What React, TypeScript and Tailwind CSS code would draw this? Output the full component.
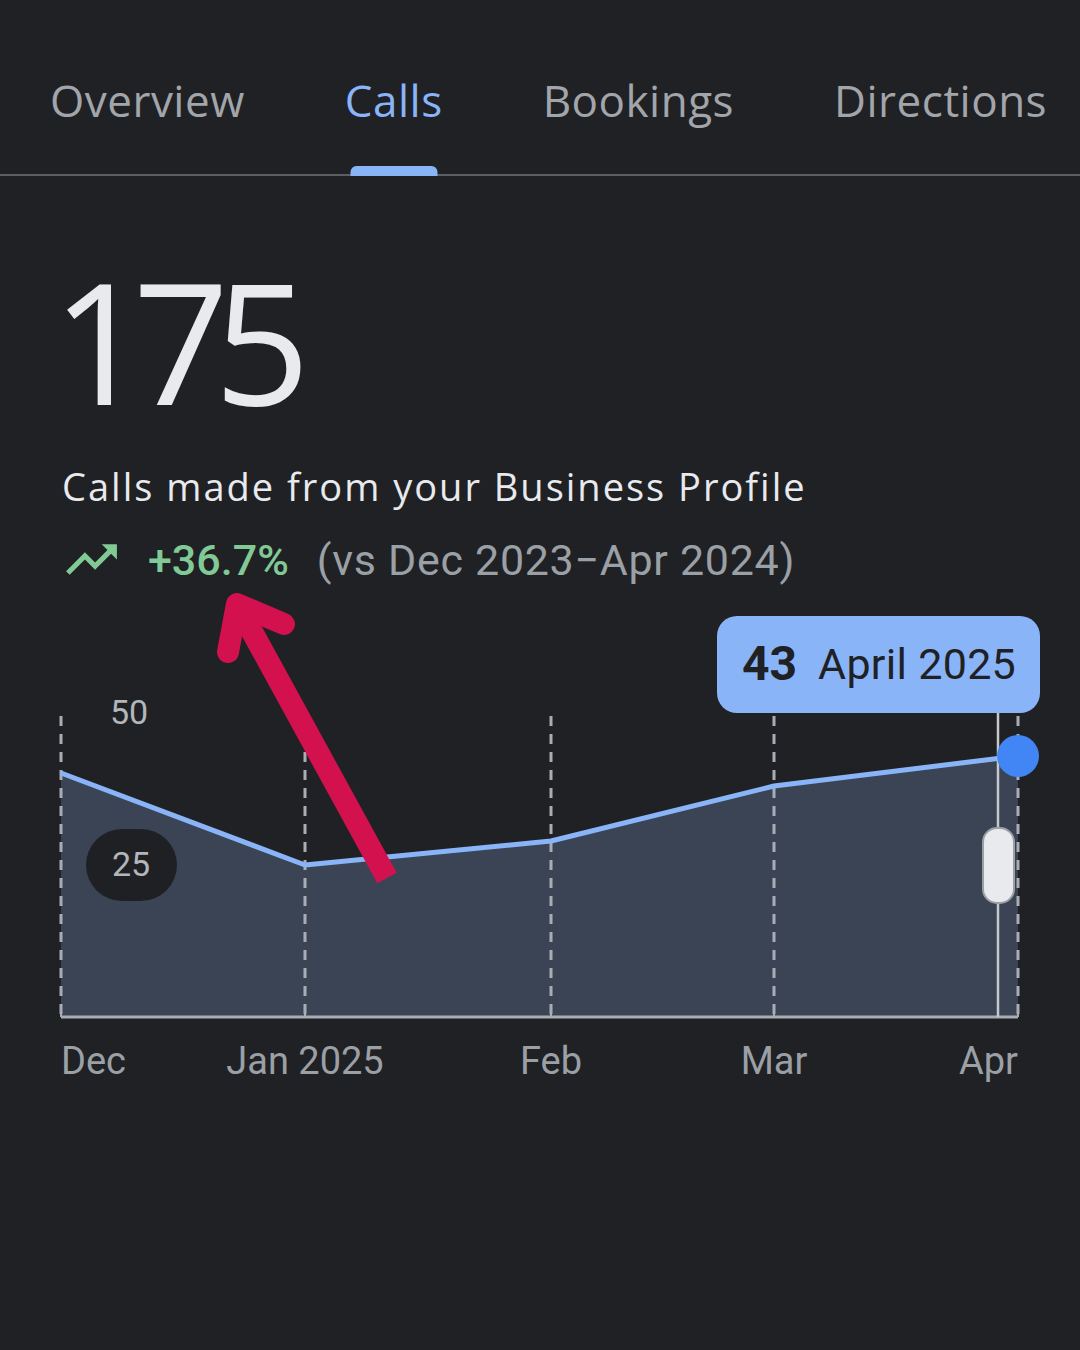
import React from "react";

const tabs = ["Overview", "Calls", "Bookings", "Directions"];

const points = [
  { x: 61, y: 773 },
  { x: 305, y: 865 },
  { x: 551, y: 841 },
  { x: 774, y: 786 },
  { x: 1018, y: 756 },
];

const months = [
  { label: "Dec", x: 61, anchor: "start" },
  { label: "Jan 2025", x: 305, anchor: "middle" },
  { label: "Feb", x: 551, anchor: "middle" },
  { label: "Mar", x: 774, anchor: "middle" },
  { label: "Apr", x: 1018, anchor: "end" },
] as const;

function Chart() {
  const line = points.map((p) => `${p.x},${p.y}`).join(" ");
  const area = `M61,1017 L${line.split(" ").join(" L")} L1018,1017 Z`;

  return (
    <div className="relative mt-[14px] h-[500px] w-full">
      <svg
        className="block h-full w-full"
        viewBox="0 600 1080 500"
        style={{ fontFamily: "Roboto, 'Liberation Sans', sans-serif" }}
      >
        <path d={area} fill="#3b4455" />
        {points.map((p) => (
          <line
            key={p.x}
            x1={p.x}
            y1={716}
            x2={p.x}
            y2={1017}
            stroke="#a9adb3"
            strokeWidth={3}
            strokeDasharray="10 8"
          />
        ))}
        <polyline
          points={line}
          fill="none"
          stroke="#8ab4f8"
          strokeWidth={5}
          strokeLinejoin="round"
        />
        <line x1={61} y1={1017} x2={1018} y2={1017} stroke="#a9adb3" strokeWidth={3} />
        {points.map((p) => (
          <line key={`t${p.x}`} x1={p.x} y1={1008} x2={p.x} y2={1017} stroke="#a9adb3" strokeWidth={2} />
        ))}
        <line x1={998} y1={700} x2={998} y2={1017} stroke="#c4c7cc" strokeWidth={2.5} />
        <rect x={983} y={828} width={31} height={75} rx={14} fill="#e8eaed" stroke="#9aa0a6" strokeWidth={2} />
        <circle cx={1018} cy={756} r={21} fill="#4285f4" />

        <text x={110} y={724} fontSize={34} fill="#b3b6bb">
          50
        </text>
        <rect x={86} y={829} width={91} height={72} rx={36} fill="#1f2023" />
        <text x={131} y={876} fontSize={34} fill="#b3b6bb" textAnchor="middle">
          25
        </text>

        {months.map((m) => (
          <text key={m.label} x={m.x} y={1074} fontSize={38} fill="#9aa0a6" textAnchor={m.anchor}>
            {m.label}
          </text>
        ))}
      </svg>

      <div className="absolute left-[717px] top-[16px] flex h-[97px] w-[323px] items-center gap-[21px] rounded-[20px] bg-[#8ab4f8] pl-[25px] font-['Roboto','Liberation_Sans',sans-serif] text-[#1f2124]">
        <span className="text-[48px] font-bold leading-none">43</span>
        <span className="text-[43px] leading-none tracking-[0.3px]">April 2025</span>
      </div>
    </div>
  );
}

export default function App() {
  return (
    <div className="relative h-[1350px] w-[1080px] overflow-hidden bg-[#202124]">
      {/* Tabs */}
      <nav className="flex h-[176px] gap-[100px] border-b-2 border-[#5b5e63] pl-[50px] pt-[26px] font-['Open_Sans','Liberation_Sans',sans-serif] text-[44px] tracking-[0.5px]">
        {tabs.map((tab) => (
          <div
            key={tab}
            className={`relative flex h-[148px] items-center ${
              tab === "Calls" ? "text-[#8ab4f8]" : "text-[#a2a5aa]"
            }`}
          >
            {tab}
            {tab === "Calls" && (
              <div className="absolute -bottom-[2px] left-1/2 h-[10px] w-[87px] -translate-x-1/2 rounded-t-[6px] bg-[#8ab4f8]" />
            )}
          </div>
        ))}
      </nav>

      <div className="px-[62px]">
        <div className="-ml-[10px] mt-[80px] font-['Open_Sans','Liberation_Sans',sans-serif] text-[168px] leading-none tracking-[-15px] text-[#e8eaed]">
          175
        </div>
        <p className="mt-[40px] font-['Open_Sans','Liberation_Sans',sans-serif] text-[38px] leading-[1.2] tracking-[2px] text-[#e8eaed]">
          Calls made from your Business Profile
        </p>
        <div className="mt-[24px] flex h-[52px] items-center font-['Roboto','Liberation_Sans',sans-serif] text-[43px] leading-[52px]">
          <svg viewBox="0 0 24 24" className="-ml-[1px] h-[61px] w-[61px] fill-[#81c995]">
            <path d="M16 6l2.29 2.29-4.88 4.88-4-4L2 16.59 3.41 18l6-6 4 4 6.3-6.29L22 12V6z" />
          </svg>
          <span className="ml-[26px] font-medium text-[#81c995]">+36.7%</span>
          <span className="ml-[28px] tracking-[0.7px] text-[#9aa0a6]">(vs Dec 2023−Apr 2024)</span>
        </div>
      </div>

      <Chart />

      {/* annotation arrow */}
      <svg className="pointer-events-none absolute inset-0 h-full w-full" viewBox="0 0 1080 1350">
        <line x1={387} y1={878} x2={238} y2={606} stroke="#d3114f" strokeWidth={22} />
        <polyline
          points="228,652 237,604 284,624"
          fill="none"
          stroke="#d3114f"
          strokeWidth={22}
          strokeLinecap="round"
          strokeLinejoin="round"
        />
      </svg>
    </div>
  );
}
